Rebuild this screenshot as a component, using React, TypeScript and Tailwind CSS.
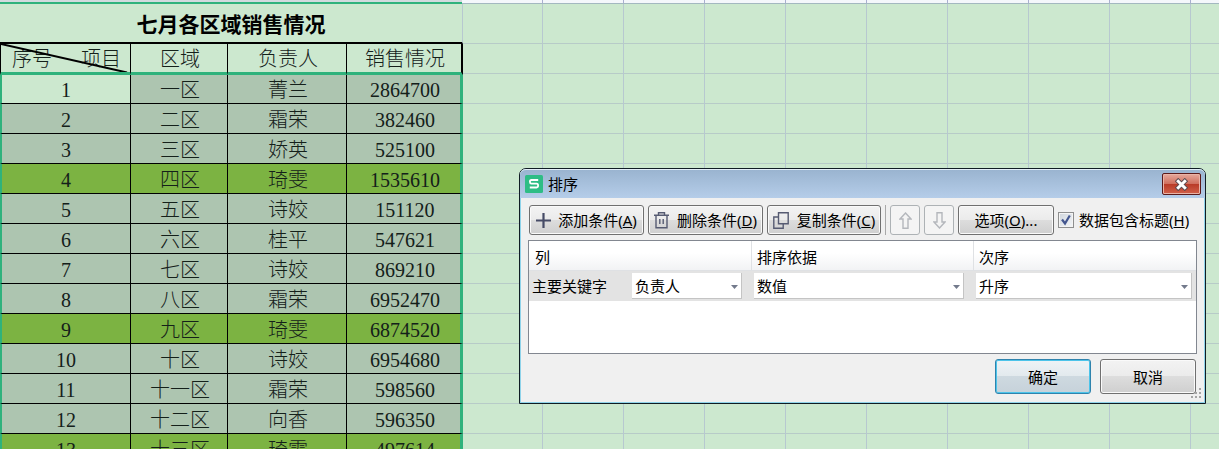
import React, { useState } from "react";

interface SalesRow {
    id: number;
    region: string;
    owner: string;
    sales: number;
}

interface SortSelectProps {
    label: string;
    options: string[];
    className?: string;
}

interface ToolButtonProps {
    text: string;
    hotkey: string;
    suffix?: string;
    className?: string;
    icon?: React.ReactNode;
}

const rows: SalesRow[] = [
    { id: 1, region: "一区", owner: "菁兰", sales: 2864700 },
    { id: 2, region: "二区", owner: "霜荣", sales: 382460 },
    { id: 3, region: "三区", owner: "娇英", sales: 525100 },
    { id: 4, region: "四区", owner: "琦雯", sales: 1535610 },
    { id: 5, region: "五区", owner: "诗姣", sales: 151120 },
    { id: 6, region: "六区", owner: "桂平", sales: 547621 },
    { id: 7, region: "七区", owner: "诗姣", sales: 869210 },
    { id: 8, region: "八区", owner: "霜荣", sales: 6952470 },
    { id: 9, region: "九区", owner: "琦雯", sales: 6874520 },
    { id: 10, region: "十区", owner: "诗姣", sales: 6954680 },
    { id: 11, region: "十一区", owner: "霜荣", sales: 598560 },
    { id: 12, region: "十二区", owner: "向香", sales: 596350 },
    { id: 13, region: "十三区", owner: "琦雯", sales: 497614 },
];

const HIGHLIGHTED_OWNER = "琦雯";

const buttonFace =
    "rounded-[3px] border border-[#707070] bg-[linear-gradient(#f3f3f3,#ebebeb_50%,#dddddd_50%,#cfcfcf)] shadow-[inset_0_0_0_1px_#fafafa]";

const SalesTable: React.FC = () => (
    <table className="w-[463px] shrink-0 table-fixed border-separate border-spacing-0 text-center text-[20px] leading-[25px] text-[#14201a]">
        <colgroup>
            <col className="w-[131px]" />
            <col className="w-[97px]" />
            <col className="w-[119px]" />
            <col className="w-[116px]" />
        </colgroup>
        <thead>
            <tr className="h-[40px]">
                <th colSpan={4} className="border-r border-b-2 border-r-[#b7c8d0] border-b-black p-0 pt-[5px] text-[21px] font-bold text-black">
                    七月各区域销售情况
                </th>
            </tr>
            <tr className="h-[31px]">
                <th className="relative border-r border-b-3 border-l border-r-black border-b-[#2fb27c] border-l-black p-0 pt-[3px] font-light">
                    <div className="flex justify-between pr-[9px] pl-[11px]">
                        <span>序号</span>
                        <span>项目</span>
                    </div>
                    <svg className="absolute inset-0 h-full w-full" viewBox="0 0 129 28" preserveAspectRatio="none" aria-hidden="true">
                        <path d="M0 0L126 28.5" stroke="#000" strokeWidth="2" />
                    </svg>
                </th>
                <th className="border-r border-b-3 border-r-black border-b-[#2fb27c] p-0 pt-[3px] pl-[2px] font-light">区域</th>
                <th className="border-r border-b-3 border-r-black border-b-[#2fb27c] p-0 pt-[3px] pl-[2px] font-light">负责人</th>
                <th className="border-r-2 border-b-3 border-r-black border-b-[#2fb27c] p-0 pt-[3px] pl-[2px] font-light">销售情况</th>
            </tr>
        </thead>
        <tbody className="font-light">
            {rows.map((row) => {
                const fill = row.owner === HIGHLIGHTED_OWNER ? "bg-[#7cb342]" : "bg-[#adc5b0]";
                return (
                    <tr key={row.id} className={row.id === 1 ? "h-[29px]" : "h-[30px]"}>
                        <td
                            className={`border-r border-b border-l-2 border-r-black border-b-black border-l-[#2fb27c] p-0 pt-[3px] ${
                                row.id === 1 ? "bg-[#cce8cf]" : fill
                            }`}
                        >
                            {row.id}
                        </td>
                        <td className={`border-r border-b border-black p-0 pt-[3px] pl-[2px] ${fill}`}>{row.region}</td>
                        <td className={`border-r border-b border-black p-0 pt-[3px] pl-[2px] ${fill}`}>{row.owner}</td>
                        <td className={`border-r-3 border-b border-r-[#2fb27c] border-b-black p-0 pt-[3px] pl-[3px] ${fill}`}>{row.sales}</td>
                    </tr>
                );
            })}
        </tbody>
    </table>
);

const EmptyCells: React.FC = () => (
    <div className="flex flex-1 flex-col">
        <div className="h-[40px] border-b border-[#b7cbc8] bg-[linear-gradient(to_right,transparent_80px,#b7c8d0_80px)] bg-[length:81px_30px] bg-[position:-1px_0]" />
        <div className="flex-1 bg-[linear-gradient(to_right,transparent_80px,#b7c8d0_80px),linear-gradient(transparent_29px,#b7cbc8_29px)] bg-[length:81px_30px] bg-[position:-1px_0]" />
    </div>
);

const ToolButton: React.FC<ToolButtonProps> = ({ text, hotkey, suffix = "", className = "", icon }) => (
    <button type="button" className={`flex h-[30px] shrink-0 items-center justify-center whitespace-nowrap ${buttonFace} ${className}`}>
        {icon}
        <span>
            {text}(<u>{hotkey}</u>){suffix}
        </span>
    </button>
);

const SortSelect: React.FC<SortSelectProps> = ({ label, options, className = "" }) => (
    <div className={`relative ${className}`}>
        <select
            aria-label={label}
            className="block h-[26px] w-full appearance-none border-r border-b border-[#c4c4c4] bg-white pl-[3px] leading-[24px]"
        >
            {options.map((option) => (
                <option key={option}>{option}</option>
            ))}
        </select>
        <svg className="pointer-events-none absolute top-[12px] right-[4px]" width="7" height="4" viewBox="0 0 7 4" aria-hidden="true">
            <path d="M0 0h7L3.5 4z" fill="#737a8c" />
        </svg>
    </div>
);

const SortDialog: React.FC = () => {
    const [hasHeader, setHasHeader] = useState(true);

    return (
        <div
            role="dialog"
            aria-label="排序"
            className="absolute top-[168px] right-[13px] left-[519px] rounded-t-[7px] border border-[#101c24] bg-[#f0f0f0] text-[15px] leading-[20px] text-black shadow-[inset_0_0_0_1px_#8fd3ea]"
        >
            <div className="flex h-[29px] items-center rounded-t-[6px] border-t border-[#e4eef8] bg-[linear-gradient(#9ab4d0,#b5cde9)] pr-[4px] pl-[5px]">
                <svg width="18" height="18" viewBox="0 0 18 18" aria-hidden="true">
                    <rect width="18" height="18" rx="1.5" fill="#2ebd85" />
                    <path d="M13.2 5H6.4Q4.9 5 4.9 6.8T6.4 8.7h5.2q1.5 0 1.5 1.9t-1.5 1.9H4.8" fill="none" stroke="#fff" strokeWidth="1.8" />
                </svg>
                <h2 className="ml-[5px] flex-1">排序</h2>
                <button
                    type="button"
                    aria-label="关闭"
                    className="flex h-[22px] w-[39px] items-center justify-center rounded-[2px] border border-[#5c1a1a] bg-[linear-gradient(#e6a99c,#d0705f_48%,#b83a27_50%,#d1604a)] shadow-[inset_0_0_0_1px_#e9b3a6]"
                >
                    <svg width="15" height="13" viewBox="0 0 15 13" aria-hidden="true">
                        <path d="M2.5 1.5l10 10M12.5 1.5l-10 10" stroke="#5a4a50" strokeWidth="4.8" />
                        <path d="M3.2 2.2l8.6 8.6M11.8 2.2l-8.6 8.6" stroke="#fff" strokeWidth="3" />
                    </svg>
                </button>
            </div>

            <div className="px-[8px] pt-[7px] pb-[9px]">
                <div className="flex items-center gap-[4px] pl-px">
                    <ToolButton
                        text="添加条件"
                        hotkey="A"
                        className="w-[115px] gap-[7px]"
                        icon={
                            <svg width="15" height="15" viewBox="0 0 15 15" aria-hidden="true">
                                <path d="M7.5 0v15M0 7.5h15" stroke="#464b66" strokeWidth="2.2" />
                            </svg>
                        }
                    />
                    <ToolButton
                        text="删除条件"
                        hotkey="D"
                        className="w-[115px] gap-[8px]"
                        icon={
                            <svg width="15" height="17" viewBox="0 0 15 17" fill="none" stroke="#565b72" strokeWidth="1.4" aria-hidden="true">
                                <path d="M0 3.2h15M4.5 3V.8h6V3M2 3.5v12.2h11V3.5M5.8 7v5M9.2 7v5" />
                            </svg>
                        }
                    />
                    <ToolButton
                        text="复制条件"
                        hotkey="C"
                        className="w-[114px] gap-[8px]"
                        icon={
                            <svg width="16" height="17" viewBox="0 0 16 17" fill="none" stroke="#565b72" strokeWidth="1.4" aria-hidden="true">
                                <path d="M5.5.7h9.7v11H5.5zM5.5 5H.8v11.2h9.4v-4.5" />
                            </svg>
                        }
                    />
                    <div className="h-[30px] w-px shrink-0 bg-[#a8a8a8]" />
                    <button
                        type="button"
                        disabled
                        aria-label="上移"
                        className="flex h-[30px] w-[30px] shrink-0 items-center justify-center rounded-[3px] border border-[#adb2b5] bg-[#f4f4f4]"
                    >
                        <svg width="13" height="17" viewBox="0 0 13 17" fill="none" stroke="#b4b7bc" strokeWidth="1.4" aria-hidden="true">
                            <path d="M6.5 1l5.5 6H9v9.3H4V7H1z" />
                        </svg>
                    </button>
                    <button
                        type="button"
                        disabled
                        aria-label="下移"
                        className="flex h-[30px] w-[30px] shrink-0 items-center justify-center rounded-[3px] border border-[#adb2b5] bg-[#f4f4f4]"
                    >
                        <svg width="13" height="17" viewBox="0 0 13 17" fill="none" stroke="#b4b7bc" strokeWidth="1.4" aria-hidden="true">
                            <path d="M6.5 16L12 10H9V.7H4V10H1z" />
                        </svg>
                    </button>
                    <ToolButton text="选项" hotkey="O" suffix="..." className="w-[96px]" />
                    <label className="flex items-center gap-[5px] whitespace-nowrap">
                        <span className="relative block h-[16px] w-[16px]">
                            <input
                                type="checkbox"
                                checked={hasHeader}
                                onChange={(e) => setHasHeader(e.target.checked)}
                                className="block h-[16px] w-[16px] appearance-none border border-[#8e8f8f] bg-[linear-gradient(135deg,#cfd5dc,#f4f6f8)] shadow-[inset_0_0_0_1px_#f4f4f4]"
                            />
                            {hasHeader && (
                                <svg className="pointer-events-none absolute inset-0" width="16" height="16" viewBox="0 0 16 16" aria-hidden="true">
                                    <path d="M4 7.5l3 4 4.8-8" fill="none" stroke="#43568f" strokeWidth="2.2" />
                                </svg>
                            )}
                        </span>
                        <span>
                            数据包含标题(<u>H</u>)
                        </span>
                    </label>
                </div>

                <div className="mt-[5px] h-[114px] border border-[#828790] bg-white">
                    <table className="w-full table-fixed border-separate border-spacing-0 text-left">
                        <colgroup>
                            <col className="w-[223px]" />
                            <col className="w-[222px]" />
                            <col />
                        </colgroup>
                        <thead>
                            <tr className="h-[30px] bg-[linear-gradient(#ffffff_40%,#f1f2f4)]">
                                <th className="border-r border-b border-[#dfe1e4] p-0 pt-[3px] pl-[6px] font-normal">列</th>
                                <th className="border-r border-b border-[#dfe1e4] p-0 pt-[3px] pl-[5px] font-normal">排序依据</th>
                                <th className="border-b border-[#dfe1e4] p-0 pt-[3px] pl-[5px] font-normal">次序</th>
                            </tr>
                        </thead>
                        <tbody>
                            <tr className="h-[30px] bg-[#e3e3e3]">
                                <td className="p-0">
                                    <div className="flex items-center justify-between pr-[10px] pl-[3px]">
                                        <span>主要关键字</span>
                                        <SortSelect label="主要关键字" options={["负责人", "区域", "销售情况"]} className="w-[110px]" />
                                    </div>
                                </td>
                                <td className="p-0 pr-[10px] pl-[2px]">
                                    <SortSelect label="排序依据" options={["数值", "单元格颜色", "字体颜色"]} />
                                </td>
                                <td className="p-0 pr-[4px] pl-[2px]">
                                    <SortSelect label="次序" options={["升序", "降序", "自定义序列"]} />
                                </td>
                            </tr>
                        </tbody>
                    </table>
                </div>

                <div className="mt-[5px] flex justify-end gap-[9px] pr-px">
                    <button
                        type="button"
                        className="h-[35px] w-[96px] rounded-[3px] border border-[#2f83ad] bg-[linear-gradient(#eef3f6,#e2e9ed_50%,#ced9e0_50%,#c6d2da)] shadow-[inset_0_0_0_1px_#4cc4ea]"
                    >
                        确定
                    </button>
                    <button type="button" className={`h-[35px] w-[96px] ${buttonFace}`}>
                        取消
                    </button>
                </div>
            </div>

            <svg className="absolute right-[4px] bottom-[4px]" width="11" height="11" viewBox="0 0 11 11" fill="#a5a5a5" aria-hidden="true">
                <path d="M9 0h2v2H9zM9 4h2v2H9zM5 4h2v2H5zM9 8h2v2H9zM5 8h2v2H5zM1 8h2v2H1z" />
            </svg>
        </div>
    );
};

const App: React.FC = () => {
    return (
        <div className="relative flex h-screen flex-col overflow-hidden bg-[#cce8cf] font-['Liberation_Serif','Noto_Sans_CJK_SC',serif]">
            {/* lower edge of the column header bar */}
            <div className="flex h-[4px] shrink-0">
                <div className="w-[462px] border-b-2 border-[#2fb27c] bg-[#d2dade]" />
                <div className="flex-1 border-b border-[#a3b8c0] bg-[#f4f7fb] bg-[linear-gradient(to_right,transparent_80px,#a9aed0_80px)] bg-[length:81px_4px]" />
            </div>
            <main className="flex min-h-0 flex-1">
                <SalesTable />
                <EmptyCells />
            </main>
            <div className="font-['Noto_Sans','Noto_Sans_CJK_SC',sans-serif]">
                <SortDialog />
            </div>
        </div>
    );
};

export default App;
